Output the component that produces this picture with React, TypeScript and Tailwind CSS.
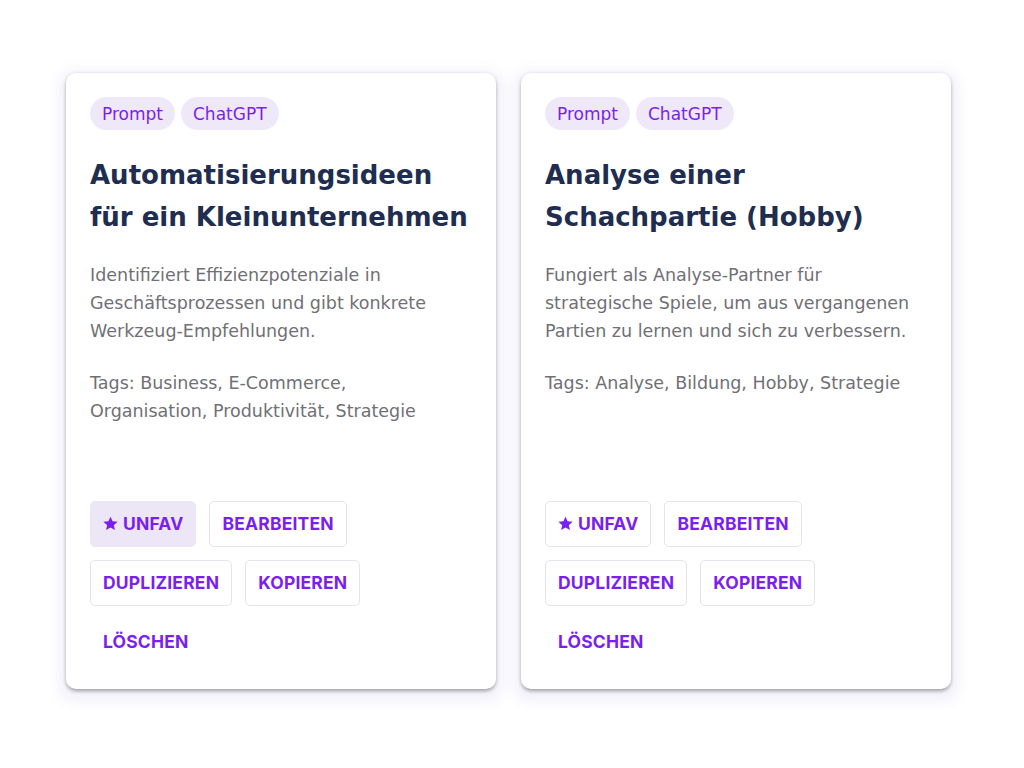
import React from "react";

type Prompt = {
  title: string;
  description: string;
  tags: string;
  fav: boolean;
};

const prompts: Prompt[] = [
  {
    title: "Automatisierungsideen für ein Kleinunternehmen",
    description:
      "Identifiziert Effizienzpotenziale in Geschäftsprozessen und gibt konkrete Werkzeug-Empfehlungen.",
    tags: "Tags: Business, E-Commerce, Organisation, Produktivität, Strategie",
    fav: true,
  },
  {
    title: "Analyse einer Schachpartie (Hobby)",
    description:
      "Fungiert als Analyse-Partner für strategische Spiele, um aus vergangenen Partien zu lernen und sich zu verbessern.",
    tags: "Tags: Analyse, Bildung, Hobby, Strategie",
    fav: false,
  },
];

const btn =
  "h-[46px] px-3 rounded-[5px] border border-[#e6e3ec] text-[17.5px] font-bold text-[#7a1ff0] tracking-[0.01em] uppercase flex items-center gap-[5px] font-['Inter',sans-serif]";

function Star() {
  return (
    <svg width="15" height="15" viewBox="0 0 24 24" className="fill-current -mt-px">
      <path d="M12 1l3.3 7.4 8.1.8-6.1 5.4 1.8 7.9L12 18.4l-7.1 4.1 1.8-7.9L.6 9.2l8.1-.8z" />
    </svg>
  );
}

function Card({ p }: { p: Prompt }) {
  return (
    <div className="bg-white rounded-[10px] min-h-[616px] p-6 flex flex-col shadow-[0_3px_4px_-1px_rgba(0,0,0,0.28),0_1px_4px_0_rgba(0,0,0,0.14),0_5px_12px_9px_rgba(130,100,200,0.08)]">
      <div className="flex gap-1.5">
        <span className="h-[33px] px-3 pt-0.5 rounded-full bg-[#efe8f8] text-[#7a1ff0] text-[17px] flex items-center">
          Prompt
        </span>
        <span className="h-[33px] px-3 pt-0.5 rounded-full bg-[#efe8f8] text-[#7a1ff0] text-[17px] flex items-center">
          ChatGPT
        </span>
      </div>
      <h2 className="mt-6 text-[26px] leading-[42px] font-bold text-[#1e2d50]">
        {p.title}
      </h2>
      <p className="mt-[23px] pr-1.5 text-[17.5px] leading-[28px] text-[#707075]">
        {p.description}
      </p>
      <p className="mt-6 pr-1.5 text-[17.5px] leading-[28px] text-[#707075]">
        {p.tags}
      </p>
      <div className="mt-auto pt-10 flex flex-col gap-[13px]">
        <div className="flex gap-[13px]">
          <button
            className={`${btn} ${p.fav ? "bg-[#ede6f7] border-[#ece6f5]" : "bg-white"}`}
          >
            <Star />
            <span>Unfav</span>
          </button>
          <button className={btn}>Bearbeiten</button>
        </div>
        <div className="flex gap-[13px]">
          <button className={btn}>Duplizieren</button>
          <button className={btn}>Kopieren</button>
        </div>
        <div className="flex">
          <button className={`${btn} border-transparent`}>Löschen</button>
        </div>
      </div>
    </div>
  );
}

export default function App() {
  return (
    <div className="min-h-screen bg-white font-['DejaVu_Sans',sans-serif]">
      <main className="pt-[73px] pl-[66px]">
        <div className="grid grid-cols-[430px_430px] gap-x-[25px]">
          {prompts.map((p) => (
            <Card key={p.title} p={p} />
          ))}
        </div>
      </main>
    </div>
  );
}
